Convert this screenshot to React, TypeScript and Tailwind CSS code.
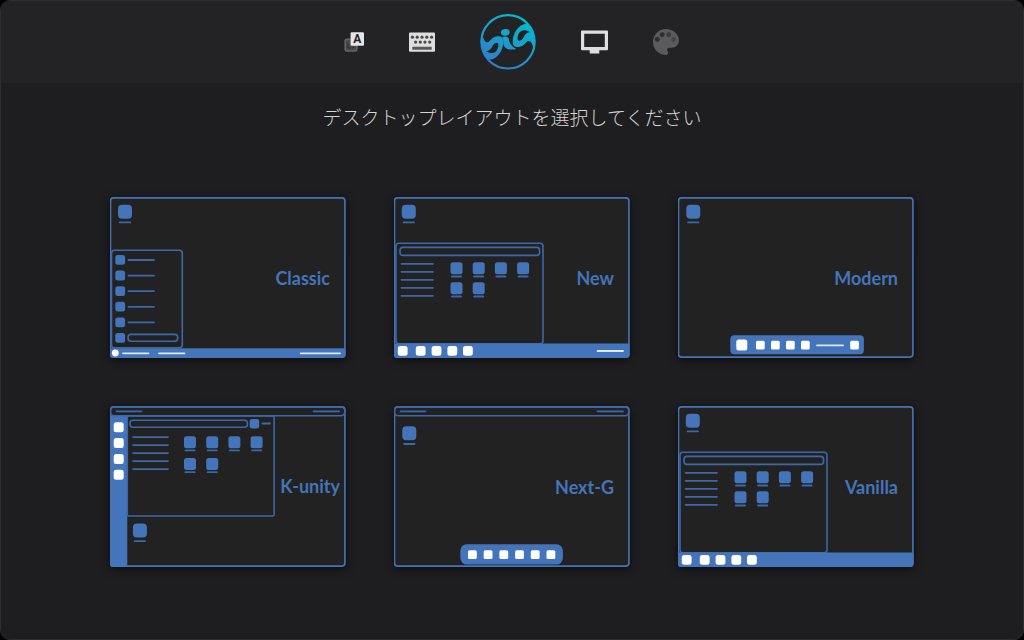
import { useState } from "react";
import type { ReactNode } from "react";

const BLUE = "#4474b9";
const LINE = "#3d68a8";

type BoxProps = { x: number; y: number; size: number; fill?: string; r?: number };

function Box({ x, y, size, fill = BLUE, r = 2.5 }: BoxProps) {
  return <rect x={x} y={y} width={size} height={size} rx={r} fill={fill} />;
}

function Line({ x1, x2, y, color = LINE }: { x1: number; x2: number; y: number; color?: string }) {
  return (
    <line x1={x1} x2={x2} y1={y} y2={y} stroke={color} strokeWidth={1.8} strokeLinecap="round" />
  );
}

function Outline({ x, y, w, h, r = 3 }: { x: number; y: number; w: number; h: number; r?: number }) {
  return (
    <rect x={x} y={y} width={w} height={h} rx={r} fill="none" stroke={LINE} strokeWidth={1.6} />
  );
}

/** Desktop shortcut: a large icon with its caption line. */
function Shortcut({ x, y }: { x: number; y: number }) {
  return (
    <>
      <Box x={x} y={y} size={14} r={4} />
      <Line x1={x + 1.8} x2={x + 12.2} y={y + 17.7} />
    </>
  );
}

/** App grid: four icons on the first row, two on the second. */
function AppGrid({ x, y, rowGap }: { x: number; y: number; rowGap: number }) {
  const cells = [[0, 0], [1, 0], [2, 0], [3, 0], [0, 1], [1, 1]];
  return (
    <>
      {cells.map(([col, row]) => (
        <g key={`${col}-${row}`}>
          <Box x={x + col * 22.2} y={y + row * rowGap} size={12} />
          <Line x1={x + col * 22.2 + 1.4} x2={x + col * 22.2 + 10.6} y={y + row * rowGap + 14.2} />
        </g>
      ))}
    </>
  );
}

function Categories({ x1, x2, y }: { x1: number; x2: number; y: number }) {
  return (
    <>
      {[0, 1, 2, 3, 4].map((i) => (
        <Line key={i} x1={x1} x2={x2} y={y + i * 8} />
      ))}
    </>
  );
}

function BottomBar({ y }: { y: number }) {
  return (
    <path d={`M0 ${y}H234Q235.5 ${y} 235.5 ${y + 2}V158Q235.5 161 232.5 161H3Q0 161 0 158Z`} fill={BLUE} />
  );
}

function TopBar() {
  return (
    <>
      <Outline x={0.4} y={1} w={234.4} h={8.8} r={4} />
      <Line x1={6.5} x2={31.5} y={5.3} />
      <Line x1={203.5} x2={229} y={5.3} />
    </>
  );
}

function ClassicPreview() {
  return (
    <>
      <Shortcut x={8} y={7.7} />
      <Outline x={1.5} y={53.3} w={70.8} h={97.5} />
      {[0, 1, 2, 3, 4, 5].map((i) => (
        <Box key={i} x={5.3} y={58 + i * 15.6} size={9.8} />
      ))}
      {[0, 1, 2, 3, 4].map((i) => (
        <Line key={i} x1={18.5} x2={44} y={63 + i * 15.6} />
      ))}
      <Outline x={18} y={137.4} w={49.8} h={6.8} r={3.2} />
      <BottomBar y={151.3} />
      <circle cx={5.3} cy={156} r={3.4} fill="#fff" />
      <Line x1={13} x2={38.5} y={156.3} color="#dfe8f5" />
      <Line x1={49} x2={74.5} y={156.3} color="#dfe8f5" />
      <Line x1={190.7} x2={230} y={156.3} color="#dfe8f5" />
    </>
  );
}

function MenuPreview({ clock = false }: { clock?: boolean }) {
  return (
    <>
      <Shortcut x={7.8} y={7.7} />
      <Outline x={2} y={46.3} w={147} h={100.5} />
      <Outline x={6} y={50.4} w={139.6} h={8} r={3} />
      <Categories x1={7.5} x2={39} y={66.8} />
      <AppGrid x={56.5} y={65.3} rowGap={20} />
      <BottomBar y={146.4} />
      {[3.8, 21.8, 37.6, 53.4, 69].map((x) => (
        <Box key={x} x={x} y={149} size={9.8} fill="#fff" />
      ))}
      {clock && <Line x1={203.5} x2={229} y={154} color="#dfe8f5" />}
    </>
  );
}

function ModernPreview() {
  return (
    <>
      <Shortcut x={8.3} y={7.7} />
      <rect x={52.3} y={138.3} width={133.6} height={19} rx={4} fill={BLUE} />
      <Box x={58.3} y={142.5} size={11} fill="#fff" />
      {[78, 93, 108, 123, 172.2].map((x) => (
        <Box key={x} x={x} y={143.7} size={8.7} fill="#fff" r={1.5} />
      ))}
      <Line x1={139} x2={165} y={148.4} color="#dfe8f5" />
    </>
  );
}

function KUnityPreview() {
  return (
    <>
      <path d="M0 10H17.3V161H3Q0 161 0 158Z" fill={BLUE} />
      <TopBar />
      {[16.3, 32.1, 47.9, 63.7].map((y) => (
        <Box key={y} x={3.7} y={y} size={10} fill="#fff" />
      ))}
      <Outline x={17.3} y={10} w={146.8} h={100} r={1.5} />
      <Outline x={20} y={14.2} w={117.4} h={7} r={3} />
      <Box x={139.6} y={13} size={9.6} />
      <Line x1={152.3} x2={160} y={17.5} />
      <Categories x1={23} x2={58} y={31.1} />
      <AppGrid x={74} y={30.2} rowGap={21.8} />
      <Shortcut x={22.9} y={117.5} />
    </>
  );
}

function NextGPreview() {
  return (
    <>
      <TopBar />
      <Shortcut x={8.3} y={20.3} />
      <rect x={66.3} y={138.3} width={102.6} height={20.3} rx={6.5} fill={BLUE} />
      {[0, 1, 2, 3, 4, 5].map((i) => (
        <Box key={i} x={74 + i * 15.7} y={144.3} size={8.8} fill="#fff" r={1.5} />
      ))}
    </>
  );
}

interface Layout {
  name: string;
  preview: ReactNode;
  labelClass?: string;
}

const layouts: Layout[] = [
  { name: "Classic", preview: <ClassicPreview /> },
  { name: "New", preview: <MenuPreview clock /> },
  { name: "Modern", preview: <ModernPreview /> },
  { name: "K-unity", preview: <KUnityPreview />, labelClass: "pr-1.5 pb-0.5" },
  { name: "Next-G", preview: <NextGPreview /> },
  { name: "Vanilla", preview: <MenuPreview /> },
];

function LanguageIcon() {
  return (
    <svg width="20" height="20" viewBox="-0.7 0 20 20">
      <rect x="0.5" y="7.4" width="11.6" height="11.6" rx="1.5" fill="#4a4a4c" stroke="#646466" strokeWidth="1.6" />
      <path d="M3.2 11.5V16M3.2 16H6M8.3 14.5V16.5" stroke="#2b2b2d" strokeWidth="1" />
      <rect x="5.9" y="0.3" width="13.4" height="13.4" rx="1.2" fill="#e6e6e6" />
      <text x="12.6" y="11.2" textAnchor="middle" fontFamily="Roboto, sans-serif" fontWeight="700" fontSize="12" fill="#242427">
        A
      </text>
    </svg>
  );
}

function KeyboardIcon() {
  return (
    <svg width="26" height="20" viewBox="0 0 26 20">
      <rect x="0" y="0.4" width="26" height="19.3" rx="1" fill="#dedede" />
      {[3.4, 8.2, 13, 17.8, 22.6].map((x) => (
        <circle key={x} cx={x} cy="5.2" r="1.6" fill="#4a4a4c" />
      ))}
      {[6.6, 11.3, 16, 20.7].map((x) => (
        <circle key={x} cx={x} cy="10.1" r="1.6" fill="#4a4a4c" />
      ))}
      <rect x="3.3" y="14.8" width="19.4" height="3" rx="0.6" fill="#58585a" />
    </svg>
  );
}

function LogoIcon() {
  return (
    <svg width="56" height="56" viewBox="0 1 168 168">
      <defs>
        <linearGradient id="logo-fill" gradientUnits="userSpaceOnUse" x1="50" y1="150" x2="120" y2="20">
          <stop offset="0" stopColor="#2f80c8" />
          <stop offset="1" stopColor="#05b8cf" />
        </linearGradient>
      </defs>
      <circle cx="84" cy="84.5" r="80" fill="none" stroke="url(#logo-fill)" strokeWidth="6.5" />
      {/* the "s" and "g" are the same wave turned half round */}
      <g fill="url(#logo-fill)" fillRule="evenodd">
        <path
          d="M6 54C9 74 14 86 22 86C30 86 34 70 52 68C62 66 70 72 70 84C70 108 54 136 30 138C20 138 8 122 5 100C2 84 2 70 6 54ZM18 112C28 112 34 104 38 96C42 88 52 84 55 90C57 110 42 128 18 112Z"
        />
        <path
          d="M162 114C159 94 154 82 146 82C138 82 134 98 116 100C106 102 98 96 98 84C98 60 114 32 138 30C148 30 160 46 163 68C166 84 166 98 162 114ZM150 56C140 56 134 64 130 72C126 80 116 84 113 78C111 58 126 40 150 56Z"
        />
        <ellipse cx="76" cy="56" rx="13" ry="10" transform="rotate(-8 76 56)" />
        <path d="M66 72C72 67 82 68 86 74C88 90 96 100 109 106C92 111 72 106 70 90C70 82 70 76 66 72Z" />
      </g>
    </svg>
  );
}

function MonitorIcon() {
  return (
    <svg width="27" height="24" viewBox="0 0 27 24">
      <path
        fill="#dedede"
        fillRule="evenodd"
        d="M1 .6H26Q27 .6 27 1.6V19.3Q27 20.3 26 20.3H18.3V23.4H8.7V20.3H1Q0 20.3 0 19.3V1.6Q0 .6 1 .6ZM3.2 3.8V17H23.8V3.8Z"
      />
    </svg>
  );
}

function PaletteIcon() {
  return (
    <svg width="26" height="26" viewBox="3 3 18 18">
      <path
        fill="#5b5b5d"
        d="M12 3c-4.97 0-9 4.03-9 9s4.03 9 9 9c.83 0 1.5-.67 1.5-1.5 0-.39-.15-.74-.39-1.01-.23-.26-.38-.61-.38-.99 0-.83.67-1.5 1.5-1.5H16c2.76 0 5-2.24 5-5 0-4.42-4.03-8-9-8z"
      />
      <circle cx="6" cy="10.3" r="1.7" fill="#2f2f31" />
      <circle cx="9.4" cy="7" r="1.7" fill="#2f2f31" />
      <circle cx="13.8" cy="7" r="1.7" fill="#3a3a3c" />
      <circle cx="17.3" cy="10.3" r="1.7" fill="#474749" />
    </svg>
  );
}

const steps = [
  { id: "language", icon: <LanguageIcon /> },
  { id: "keyboard", icon: <KeyboardIcon /> },
  { id: "home", icon: <LogoIcon /> },
  { id: "layout", icon: <MonitorIcon /> },
  { id: "theme", icon: <PaletteIcon /> },
];

export default function App() {
  const [selected, setSelected] = useState<string | null>(null);

  return (
    <div className="min-h-screen bg-black">
      <div className="flex min-h-screen flex-col overflow-hidden rounded-[10px] border border-[#2d2d30] bg-[#1e1e20]">
        <header className="flex h-[82px] items-center justify-center gap-[45px] bg-[#232326] pr-px pb-px">
          {steps.map((step) => (
            <button key={step.id} type="button" aria-label={step.id}>
              <span className="block">{step.icon}</span>
            </button>
          ))}
        </header>

        <main className="flex flex-1 flex-col items-center px-6 pt-5">
          <h1 className="font-['Noto_Sans_CJK_JP',sans-serif] text-[19px] leading-7 font-light text-[#d4d4d4]">
            デスクトップレイアウトを選択してください
          </h1>

          <div className="mt-[66px] mb-8 grid w-full max-w-[804px] grid-cols-3 gap-12">
            {layouts.map(({ name, preview, labelClass }) => (
              <button
                key={name}
                type="button"
                aria-pressed={selected === name}
                onClick={() => setSelected(name)}
                className="relative flex aspect-[236/161] items-center justify-end rounded-sm bg-[#222222] shadow-[0_2px_8px_rgba(0,0,0,0.6)]"
              >
                <svg viewBox="0 0 236 161" className="absolute inset-0 h-full w-full" aria-hidden="true">
                  <rect x="0.5" y="0.9" width="234.4" height="159.2" rx="3" fill="none" stroke={BLUE} strokeWidth="1.6" />
                  {preview}
                </svg>
                <span
                  className={`relative font-['Lato',sans-serif] text-[18px] leading-6 font-bold text-[#4474b9] ${labelClass ?? "pr-4"}`}
                >
                  {name}
                </span>
              </button>
            ))}
          </div>
        </main>
      </div>
    </div>
  );
}
